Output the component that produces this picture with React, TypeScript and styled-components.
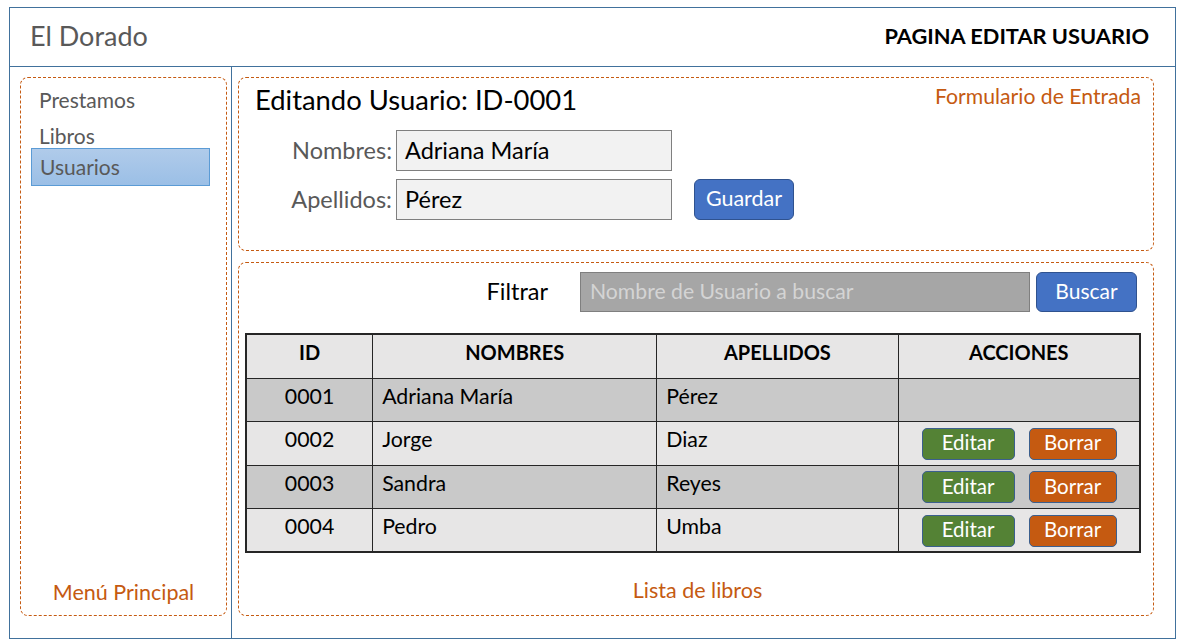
import React from "react";
import styled, { createGlobalStyle } from "styled-components";

const GlobalStyle = createGlobalStyle`
  html, body { margin: 0; padding: 0; background: #ffffff; }
  body { font-family: Lato, "Open Sans", sans-serif; }
  * { box-sizing: border-box; }
`;

const ORANGE = "#c55a11";

const Frame = styled.div`
  margin: 7px 0 0 9px;
  width: 1167px;
  height: 632px;
  border: 1.5px solid #41719c;
  display: flex;
  flex-direction: column;
`;

const Header = styled.header`
  height: 59px;
  flex: none;
  border-bottom: 1.5px solid #41719c;
  display: flex;
  align-items: center;
  justify-content: space-between;
  padding: 0 26px 3px 20px;
`;

const Brand = styled.div`
  font-size: 27px;
  color: #595959;
`;

const PageTitle = styled.div`
  font-size: 21.8px;
  font-weight: 700;
  color: #000;
`;

const Body = styled.div`
  flex: 1;
  display: flex;
  min-height: 0;
`;

const Sidebar = styled.aside`
  width: 222px;
  flex: none;
  border-right: 1.5px solid #41719c;
  padding: 10px 4px 22px 10px;
  display: flex;
`;

const DashedBox = styled.section`
  border: 1px dashed ${ORANGE};
  border-radius: 8px;
`;

const MenuBox = styled(DashedBox)`
  flex: 1;
  display: flex;
  flex-direction: column;
  padding: 5px 15px 10px 9px;
`;

const MenuList = styled.nav`
  display: flex;
  flex-direction: column;
  gap: 4px;
`;

const MenuItem = styled.div<{ $active?: boolean }>`
  height: ${(p) => (p.$active ? "38px" : "32px")};
  display: flex;
  align-items: center;
  padding-left: 9px;
  font-size: 21px;
  color: #595959;
  ${(p) =>
    p.$active &&
    `
    margin-top: -7px;
    margin-left: 1px;
    margin-right: 1px;
    background: linear-gradient(#b0cbea, #9bbfe6);
    border: 1px solid #5b9bd5;
    padding-left: 8px;
    padding-bottom: 2px;
  `}
`;

const BoxCaption = styled.div`
  font-size: 21.5px;
  color: ${ORANGE};
`;

const MenuCaption = styled(BoxCaption)`
  margin-top: auto;
  text-align: center;
  margin-left: 6px;
`;

const Main = styled.main`
  flex: 1;
  display: flex;
  flex-direction: column;
  gap: 11px;
  padding: 10px 21px 22px 6px;
`;

const FormBox = styled(DashedBox)`
  height: 174px;
  flex: none;
  padding: 5px 12px 0 16px;
`;

const FormHead = styled.div`
  display: flex;
  justify-content: space-between;
  align-items: flex-start;
`;

const FormTitle = styled.h1`
  margin: 0;
  font-size: 27.4px;
  font-weight: 400;
  line-height: 33px;
  color: #000;
`;

const FormCaption = styled(BoxCaption)`
  font-size: 21.2px;
  line-height: 24px;
  margin-top: 1px;
`;

const Fields = styled.div`
  margin-top: 14px;
  display: grid;
  grid-template-columns: 137px 276px auto;
  grid-auto-rows: 41px;
  row-gap: 8px;
  column-gap: 4px;
  align-items: center;
`;

const Label = styled.label`
  text-align: right;
  font-size: 23.5px;
  color: #595959;
  padding-bottom: 2px;
`;

const TextBox = styled.div`
  height: 41px;
  border: 1.5px solid #7f7f7f;
  background: #f2f2f2;
  padding: 0 0 2px 8px;
  display: flex;
  align-items: center;
  font-size: 23.5px;
  color: #000;
`;

const BlueButton = styled.button`
  height: 41px;
  border: 1px solid #2f528f;
  border-radius: 6px;
  background: #4472c4;
  color: #fff;
  font-family: inherit;
  font-size: 21.5px;
  padding: 0 0 4px;
`;

const SaveButton = styled(BlueButton)`
  width: 100px;
  margin-left: 18px;
`;

const ListBox = styled(DashedBox)`
  flex: 1;
  display: flex;
  flex-direction: column;
  padding: 9px 11px 0 6px;
`;

const FilterRow = styled.div`
  display: flex;
  justify-content: flex-end;
  align-items: center;
  padding-right: 5px;
`;

const FilterLabel = styled.span`
  font-size: 23.5px;
  color: #000;
  margin-right: 32px;
  padding-bottom: 2px;
`;

const SearchBox = styled.div`
  width: 450px;
  height: 40px;
  background: #a6a6a6;
  border: 1.5px solid #7f7f7f;
  display: flex;
  align-items: center;
  padding: 0 0 2px 9px;
  font-size: 21.2px;
  color: #d4d4d4;
`;

const SearchButton = styled(BlueButton)`
  width: 101px;
  height: 40px;
  margin-left: 6px;
  font-size: 21px;
`;

const Table = styled.table`
  margin-top: 21px;
  width: 896px;
  border-collapse: collapse;
  border: 2px solid #262626;
  font-size: 21.3px;
  color: #000;
`;

const Th = styled.th<{ $w: number }>`
  width: ${(p) => p.$w}px;
  height: 44px;
  background: #e7e6e6;
  border: 1.5px solid #262626;
  font-size: 20px;
  font-weight: 700;
  text-align: center;
  padding: 0 0 9px;
`;

const Tr = styled.tr<{ $dark: boolean }>`
  height: 43.5px;
  background: ${(p) => (p.$dark ? "#c9c9c9" : "#e7e6e6")};
`;

const Td = styled.td<{ $align?: "center" | "left" | "actions" }>`
  border: 1.5px solid #262626;
  padding: ${(p) =>
    p.$align === "actions" ? "0" : p.$align === "center" ? "0 0 8px" : "0 0 8px 9px"};
  text-align: ${(p) => (p.$align === "center" ? "center" : "left")};
`;

const Actions = styled.div`
  display: flex;
  gap: 14px;
  padding-left: 23px;
  padding-top: 1px;
`;

const ActionButton = styled.button<{ $kind: "edit" | "delete" }>`
  width: ${(p) => (p.$kind === "edit" ? "93px" : "88px")};
  height: 32px;
  border: 1px solid #3b5f8e;
  border-radius: 5px;
  background: ${(p) => (p.$kind === "edit" ? "#548235" : ORANGE)};
  color: #fff;
  font-family: inherit;
  font-size: 20.5px;
  padding: 0 0 3px;
`;

const ListCaption = styled(BoxCaption)`
  margin-top: auto;
  margin-bottom: 12px;
  text-align: center;
  padding-left: 8px;
`;

const users = [
  { id: "0001", nombres: "Adriana María", apellidos: "Pérez", actions: false },
  { id: "0002", nombres: "Jorge", apellidos: "Diaz", actions: true },
  { id: "0003", nombres: "Sandra", apellidos: "Reyes", actions: true },
  { id: "0004", nombres: "Pedro", apellidos: "Umba", actions: true },
];

export default function App() {
  return (
    <>
      <GlobalStyle />
      <Frame>
        <Header>
          <Brand>El Dorado</Brand>
          <PageTitle>PAGINA EDITAR USUARIO</PageTitle>
        </Header>
        <Body>
          <Sidebar>
            <MenuBox>
              <MenuList>
                <MenuItem>Prestamos</MenuItem>
                <MenuItem>Libros</MenuItem>
                <MenuItem $active>Usuarios</MenuItem>
              </MenuList>
              <MenuCaption>Menú Principal</MenuCaption>
            </MenuBox>
          </Sidebar>
          <Main>
            <FormBox>
              <FormHead>
                <FormTitle>Editando Usuario: ID-0001</FormTitle>
                <FormCaption>Formulario de Entrada</FormCaption>
              </FormHead>
              <Fields>
                <Label>Nombres:</Label>
                <TextBox>Adriana María</TextBox>
                <span />
                <Label>Apellidos:</Label>
                <TextBox>Pérez</TextBox>
                <SaveButton>Guardar</SaveButton>
              </Fields>
            </FormBox>
            <ListBox>
              <FilterRow>
                <FilterLabel>Filtrar</FilterLabel>
                <SearchBox>Nombre de Usuario a buscar</SearchBox>
                <SearchButton>Buscar</SearchButton>
              </FilterRow>
              <Table>
                <thead>
                  <tr>
                    <Th $w={127}>ID</Th>
                    <Th $w={285}>NOMBRES</Th>
                    <Th $w={242}>APELLIDOS</Th>
                    <Th $w={242}>ACCIONES</Th>
                  </tr>
                </thead>
                <tbody>
                  {users.map((u, i) => (
                    <Tr key={u.id} $dark={i % 2 === 0}>
                      <Td $align="center">{u.id}</Td>
                      <Td>{u.nombres}</Td>
                      <Td>{u.apellidos}</Td>
                      <Td $align="actions">
                        {u.actions && (
                          <Actions>
                            <ActionButton $kind="edit">Editar</ActionButton>
                            <ActionButton $kind="delete">Borrar</ActionButton>
                          </Actions>
                        )}
                      </Td>
                    </Tr>
                  ))}
                </tbody>
              </Table>
              <ListCaption>Lista de libros</ListCaption>
            </ListBox>
          </Main>
        </Body>
      </Frame>
    </>
  );
}
